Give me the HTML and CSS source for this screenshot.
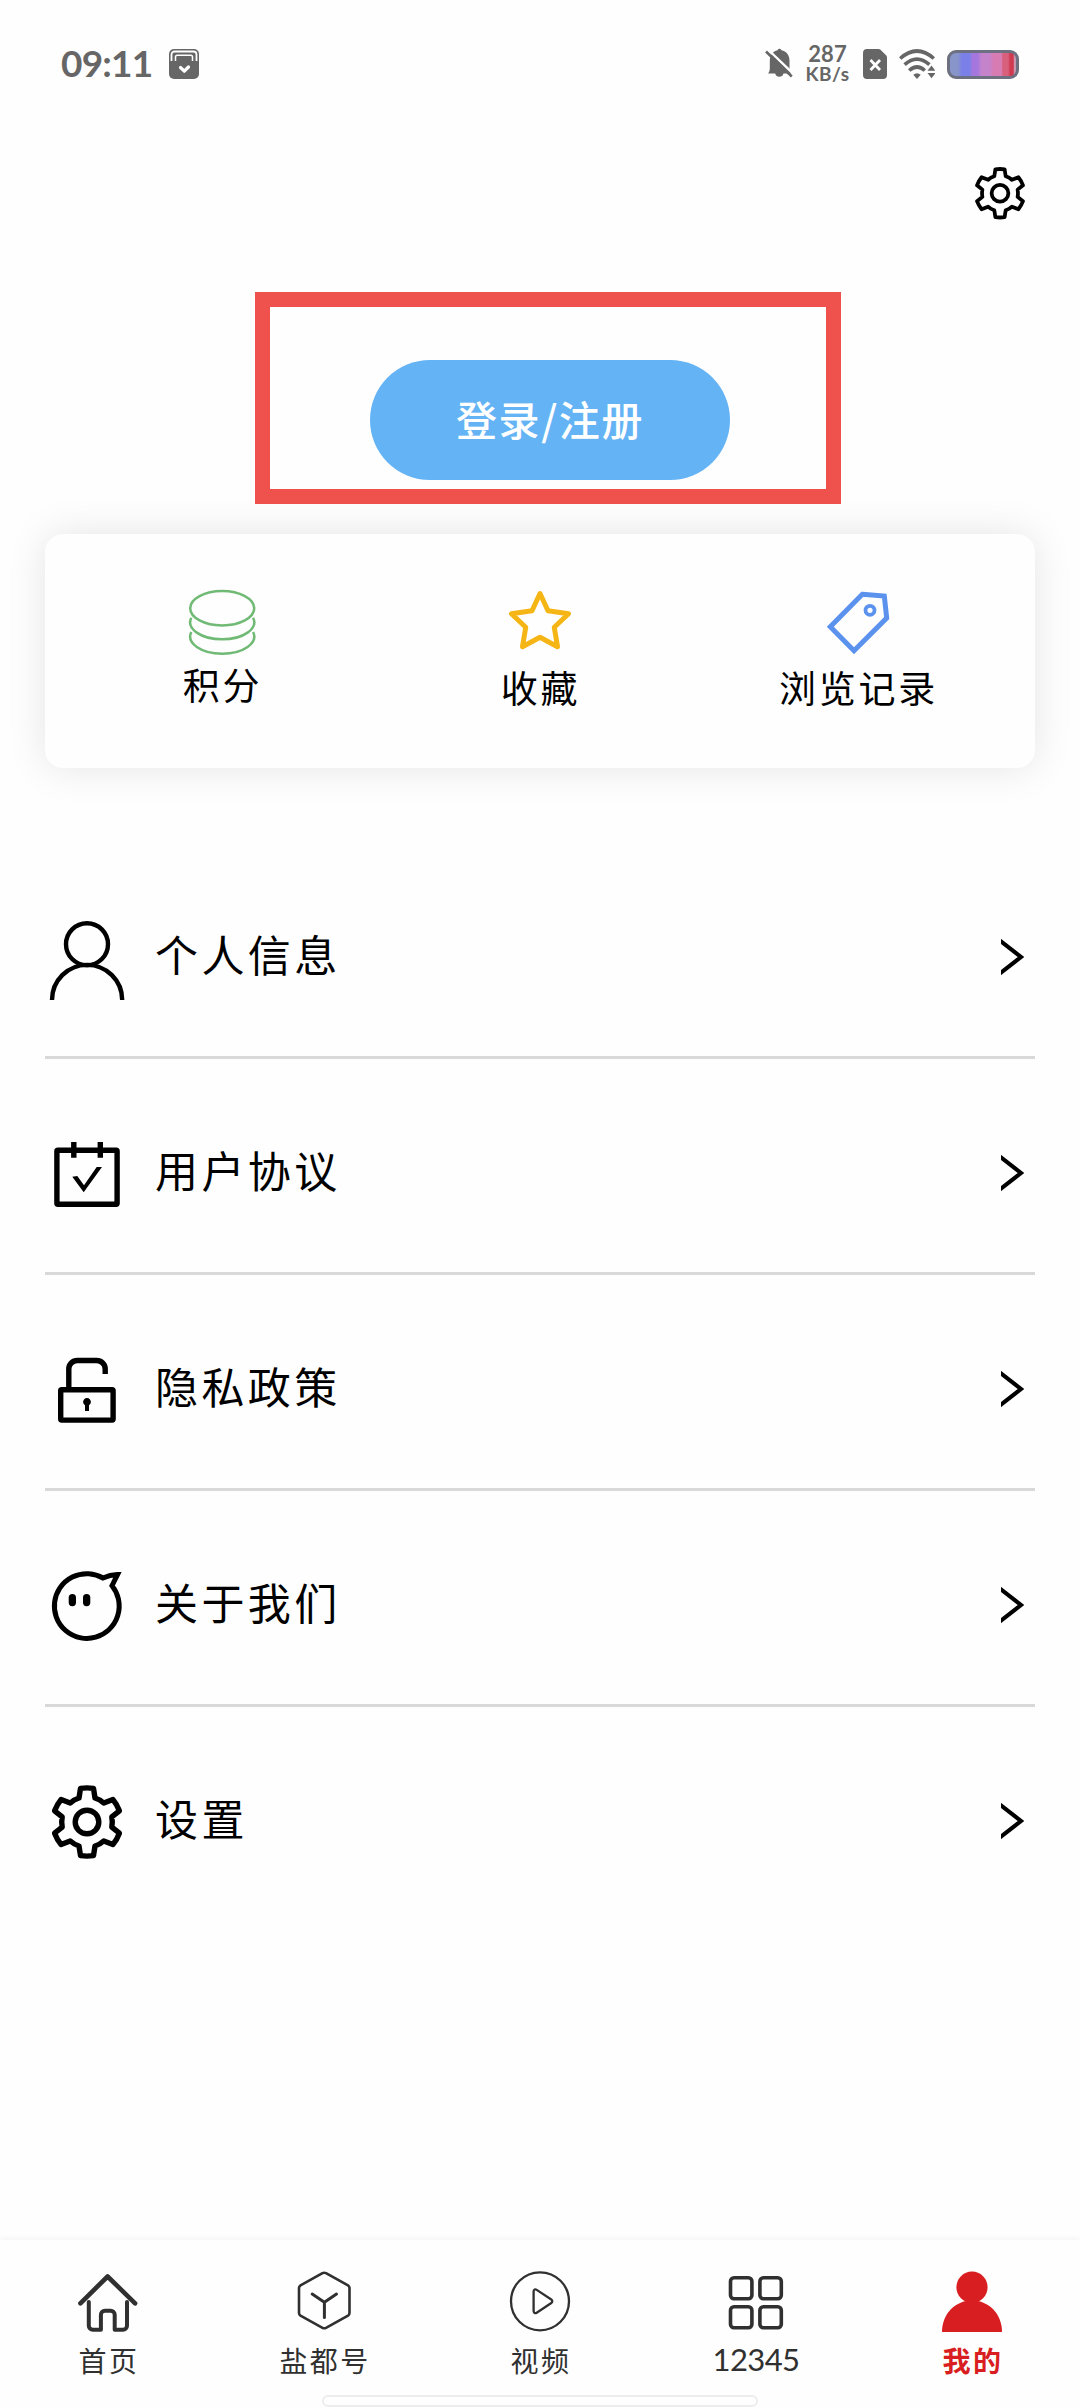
FILE: index.html
```html
<!DOCTYPE html>
<html lang="zh-CN">
<head>
<meta charset="utf-8">
<title>我的</title>
<link rel="stylesheet" href="styles.css">
</head>
<body>
<svg class="defs" width="0" height="0" aria-hidden="true">
  <symbol id="gear" viewBox="-42 -44 84 88">
    <path d="M-8-24L-6.500-33.700Q0-34.600 6.500-33.700L8-24Q13-22.500 16.800-18.900L25.900-22.500Q30-17.500 32.400-11.200L24.800-5.100Q25.800 0 24.800 5.100L32.400 11.200Q30 17.500 25.900 22.500L16.800 18.900Q13 22.500 8 24L6.500 33.700Q0 34.600-6.500 33.700L-8 24Q-13 22.500-16.800 18.900L-25.900 22.500Q-30 17.500-32.400 11.200L-24.800 5.100Q-25.800 0-24.800-5.100L-32.400-11.200Q-30-17.500-25.900-22.500L-16.800-18.900Q-13-22.500-8-24Z"/>
    <circle r="11.800"/>
  </symbol>
  <symbol id="chevron" viewBox="0 0 23 36"><path d="M-2 0.800L20 18L-2 35.200"/></symbol>
</svg>

<header class="status">
  <span class="clock">09:11</span>
  <svg class="s-app" viewBox="0 0 30 30">
    <rect width="30" height="30" rx="5" fill="#666"/>
    <path d="M2.500 12V5.500a3 3 0 0 1 3-3h19a3 3 0 0 1 3 3V12" fill="#666" stroke="#fff" stroke-width="1.800"/>
    <path d="M6.500 12V8a1.800 1.800 0 0 1 1.800-1.800h13.400A1.800 1.800 0 0 1 23.500 8v4" fill="none" stroke="#fff" stroke-width="1.500"/>
    <path d="M11.500 18.500l3.800 3.700 4.200-4.200" fill="none" stroke="#fff" stroke-width="3.200" stroke-linecap="round" stroke-linejoin="round"/>
  </svg>
  <div class="status-right">
    <svg class="s-bell" viewBox="0 0 28 32">
      <path d="M3 25.500c1.500-1.500 1.800-3 1.800-6v-6C4.800 7 8 3 12.500 2.200c1-2 3-2 4 0 5 1 8 5 8 10.600v7c0 3 .500 4.200 2 5.700H18.500a4.300 4.300 0 0 1-8.300 0z" fill="#666"/>
      <path d="M3 1.500L29 26.500" stroke="#fff" stroke-width="2.400"/>
      <path d="M1 3.500L26.800 28.500" stroke="#666" stroke-width="2.600"/>
    </svg>
    <div class="speed"><span class="rate">287</span><span class="unit">KB/s</span></div>
    <svg class="s-sim" viewBox="0 0 24 30">
      <path d="M4 0h11.500a3 3 0 0 1 2 .8l5.600 5.400a3 3 0 0 1 .9 2.200V26a4 4 0 0 1-4 4H4a4 4 0 0 1-4-4V4a4 4 0 0 1 4-4z" fill="#666"/>
      <path d="M7.500 11l9.500 10M17 11L7.500 21" stroke="#fff" stroke-width="2.800"/>
    </svg>
    <svg class="s-wifi" viewBox="0 0 36 30">
      <g fill="none" stroke="#666" stroke-width="3.600">
        <path d="M1.200 9.500Q18-5.500 34.800 9.500"/>
        <path d="M5.600 15.600Q18 4.600 30.400 15.600"/>
        <path d="M10.200 21.500Q18 14.500 25.800 21.500"/>
      </g>
      <path d="M14.300 25.800q3.700-3 7.400 0L18 30z" fill="#666"/>
      <path d="M28.500 21.800L32.500 16.500 36.500 21.800zM28.500 24l4 5.300L36.500 24z" fill="#666"/>
    </svg>
    <div class="battery"></div>
  </div>
</header>

<div class="toolbar"><svg class="top-gear"><use href="#gear"/></svg></div>

<main>
  <section class="highlight"><button class="login">登录/注册</button></section>

  <section class="card">
    <div class="cell points">
      <svg viewBox="0 0 72 72" fill="none" stroke="#70ba75" stroke-width="2.500">
        <ellipse cx="36.200" cy="21.200" rx="32" ry="17.200"/>
        <path d="M5.300 30.700A32 17.200 0 1 0 67.100 30.700M5.300 45A32 17.200 0 1 0 67.100 45"/>
      </svg>
      <span>积分</span>
    </div>
    <div class="cell">
      <svg viewBox="0 0 72 72" fill="none" stroke="#f5b515" stroke-width="5" stroke-linejoin="round">
        <path d="M36 6.500L44 23.700 64.500 26.700 50.300 40.300 53.500 59.700 36 50.300 18.500 59.700 21.700 40.300 7.500 26.700 28 23.700Z"/>
      </svg>
      <span>收藏</span>
    </div>
    <div class="cell">
      <svg viewBox="0 0 72 72" fill="none" stroke="#5a92ee" stroke-width="5">
        <path d="M40.300 7.300L62.300 9 64.700 31 32 63.700 8.300 39.700Z"/>
        <circle cx="48" cy="23.300" r="4.500" stroke-width="3.800"/>
      </svg>
      <span>浏览记录</span>
    </div>
  </section>

  <ul class="menu">
    <li>
      <svg class="icon person" viewBox="0 0 84 88"><circle cx="42" cy="30.200" r="21"/><path d="M7 86A35 35 0 0 1 77.200 86"/></svg>
      <span>个人信息</span><svg class="chev"><use href="#chevron"/></svg>
    </li>
    <li>
      <svg class="icon" viewBox="0 0 84 88"><rect x="11.900" y="20.300" width="60.200" height="53.900" rx="1"/><path d="M28.800 12v15.700M55.300 12v15.700"/><path class="solid" d="M27.300 46.700L32.300 46 39 55.300 51.700 37H57L38.700 62.300Z"/></svg>
      <span>用户协议</span><svg class="chev"><use href="#chevron"/></svg>
    </li>
    <li>
      <svg class="icon" viewBox="0 0 84 88"><rect x="15.700" y="43.700" width="52.400" height="30.400" rx="1"/><path d="M23.800 43V23a8.500 8.500 0 0 1 8.500-8.500H51.700a8.500 8.500 0 0 1 8.500 8.500V28"/><path class="solid" d="M40 65V59.300a3.900 3.900 0 1 1 4 0V65z"/></svg>
      <span>隐私政策</span><svg class="chev"><use href="#chevron"/></svg>
    </li>
    <li>
      <svg class="icon face" viewBox="0 0 84 88"><path d="M58 16A32.400 32.400 0 1 0 67 23.700L72.500 12.600Q65 13 58 16Z"/><g class="solid"><rect x="23.700" y="32" width="7.300" height="12.200" rx="3.600"/><rect x="38" y="32" width="7.300" height="12.200" rx="3.600"/></g></svg>
      <span>关于我们</span><svg class="chev"><use href="#chevron"/></svg>
    </li>
    <li>
      <svg class="icon"><use href="#gear"/></svg>
      <span>设置</span><svg class="chev"><use href="#chevron"/></svg>
    </li>
  </ul>
</main>

<nav class="tabs">
  <a class="tab">
    <svg viewBox="0 0 64 64" stroke-width="4"><path stroke-width="4.600" d="M4.400 34.300L31.600 7.500 59.100 34.300"/><path d="M12.800 33V56.700a4 4 0 0 0 4 4H24.900V45.700a4 4 0 0 1 4-4h5.800a4 4 0 0 1 4 4v15h8.300a4 4 0 0 0 4-4V33"/></svg>
    <span>首页</span>
  </a>
  <a class="tab">
    <svg viewBox="0 0 64 64" stroke-width="2.600"><path d="M30.500 4.200Q32.200 3.300 34 4.200L56 16.300Q57.500 17.300 57.500 19V44Q57.500 45.700 56 46.700L34 58.800Q32.200 59.700 30.500 58.800L8.500 46.700Q7 45.700 7 44V19Q7 17.300 8.500 16.300Z"/><path stroke-width="3" d="M20.200 25L32.400 33.300 44.500 25M32.400 33.300V48.500"/></svg>
    <span>盐都号</span>
  </a>
  <a class="tab">
    <svg viewBox="0 0 64 64" stroke-width="2.300"><circle cx="32" cy="32.300" r="29"/><path d="M25.600 22.500c0-2 1.600-2.600 3.100-1.600l14.600 9.600c1.300.9 1.300 2.600 0 3.500l-14.600 9.700c-1.500 1-3.100.3-3.100-1.600z"/></svg>
    <span>视频</span>
  </a>
  <a class="tab">
    <svg viewBox="0 0 64 64" stroke-width="3.600"><rect x="6.500" y="8.800" width="21.400" height="21" rx="3.500"/><rect x="35.900" y="8.800" width="21.400" height="21" rx="3.500"/><rect x="6.500" y="37.800" width="21.400" height="21" rx="3.500"/><rect x="35.900" y="37.800" width="21.400" height="21" rx="3.500"/></svg>
    <span class="num">12345</span>
  </a>
  <a class="tab active">
    <svg viewBox="0 0 64 64"><circle cx="32" cy="18.200" r="15.600"/><path d="M2 63C2 45 15 31.500 32 31.500S62 45 62 63z"/></svg>
    <span>我的</span>
  </a>
  <i class="home-bar"></i>
</nav>
</body>
</html>
```

FILE: styles.css
```css
* { box-sizing: border-box; }

body {
  margin: 0;
  width: 1080px;
  height: 2408px;
  display: flex;
  flex-direction: column;
  overflow: hidden;
  background: #fefefe;
  color: #000;
  font-family: "Noto Sans CJK SC", sans-serif;
}

svg { display: block; flex: none; overflow: hidden; }
.defs { position: absolute; }

/* status bar */
.status {
  height: 128px;
  padding: 0 61px 0 61px;
  display: flex;
  align-items: center;
  color: #666;
  font-family: Lato, sans-serif;
  font-weight: 700;
}
.clock { width: 108px; margin-top: -3px; font-size: 37px; letter-spacing: -0.8px; }
.s-app { width: 30px; height: 30px; }
.status-right { margin-left: auto; display: flex; align-items: center; }
.s-bell { width: 28px; height: 32px; margin-right: 12px; }
.speed { width: 45px; display: flex; flex-direction: column; align-items: center; line-height: 20px; }
.rate { font-size: 22px; }
.unit { font-size: 19px; letter-spacing: 0.5px; }
.s-sim { width: 24px; height: 30px; margin: 0 12px 0 13px; }
.s-wifi { width: 36px; height: 30px; margin-right: 12px; }
.battery {
  width: 72px;
  height: 29px;
  border: 3px solid #6c7080;
  border-radius: 9px;
  background: linear-gradient(90deg, #8795cb 0 12%, #7b7fe8 18% 30%, #a577de 34% 42%, #c583cb 48% 60%, #d67cb2 66% 78%, #d8607c 80% 88%, #d03a50 91% 96%, #c995ad 97%);
}

.toolbar { height: 164px; padding: 34px 50px 0 0; display: flex; justify-content: flex-end; }
.top-gear { width: 60px; height: 62.5px; fill: none; stroke: #000; stroke-width: 5.3; stroke-linejoin: round; }

/* sign in */
.highlight {
  width: 586px;
  height: 212px;
  margin-left: 255px;
  padding: 53px 0 0 100px;
  border: 15px solid #ef524c;
}
.login {
  display: block;
  width: 360px;
  height: 120px;
  padding: 0 0 3px;
  border: 0;
  border-radius: 60px;
  background: #64b3f5;
  color: #fff;
  font: 500 41px/1 "Noto Sans CJK SC", sans-serif;
  letter-spacing: 1.6px;
}

/* shortcut card */
.card {
  width: 990px;
  height: 234px;
  margin: 30px 45px 0;
  padding: 53px 18px 0;
  display: flex;
  border-radius: 18px;
  background: #fefefe;
  box-shadow: 0 0 40px rgba(0, 0, 0, 0.1);
}
.cell { flex: 1; display: flex; flex-direction: column; align-items: center; }
.cell svg { width: 72px; height: 72px; }
.cell span { margin-top: 8px; padding-left: 1px; font-size: 37px; line-height: 40px; letter-spacing: 2.8px; }
.points span { margin-top: 5px; }

/* menu */
.menu { margin: 75px 45px 0; padding: 0; list-style: none; }
.menu li {
  height: 216px;
  padding: 17px 11px 0 0;
  display: flex;
  align-items: center;
  border-bottom: 3px solid #d9d9d9;
}
.menu li:last-child { border-bottom-color: transparent; }
.menu span { margin: -10px 0 0 26px; font-size: 43px; line-height: 48px; letter-spacing: 3.4px; }
.icon { width: 84px; height: 88px; fill: none; stroke: #000; stroke-width: 5.4; stroke-linejoin: round; }
.person { stroke-width: 4.4; }
.face { stroke-width: 5; stroke-linejoin: miter; }
.solid { fill: #000; stroke: none; }
.chev { width: 23px; height: 36px; margin: -2px 0 0 auto; fill: none; stroke: #000; stroke-width: 4; }

/* bottom tabs */
.tabs {
  position: relative;
  height: 168px;
  margin-top: auto;
  padding-top: 29px;
  display: flex;
  box-shadow: 0 -2px 5px rgba(0, 0, 0, 0.04);
}
.tab { flex: 1; display: flex; flex-direction: column; align-items: center; color: #303030; }
.tab svg { width: 64px; height: 64px; fill: none; stroke: #303030; stroke-linecap: round; stroke-linejoin: round; }
.tab span { margin-top: 12px; padding-left: 2px; font-size: 28px; line-height: 30px; letter-spacing: 2.4px; }
.tab .num { margin-top: 11px; font-family: Lato, sans-serif; font-size: 31px; letter-spacing: -0.6px; padding: 0; }
.active { color: #d81e20; font-weight: 700; }
.active svg { fill: #d81e20; stroke: none; }
.home-bar {
  position: absolute;
  left: 322px;
  bottom: 1px;
  width: 436px;
  height: 12px;
  border: 2px solid #ededed;
  border-radius: 6px;
  background: #fefefe;
}
```
